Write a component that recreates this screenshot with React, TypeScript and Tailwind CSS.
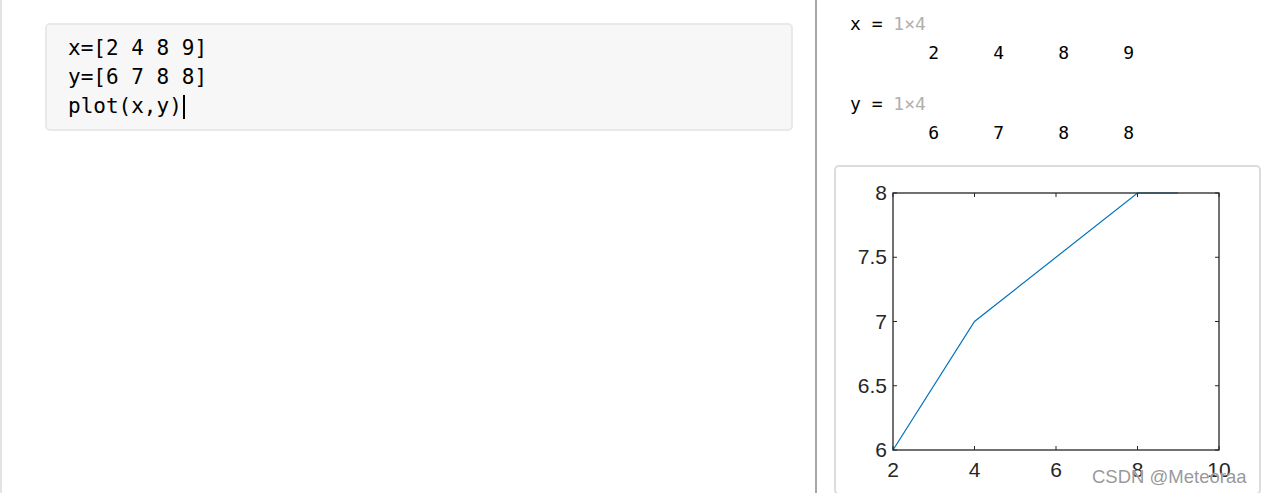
import React from 'react'

// Live-editor style view: code cell on the left, output + figure on the right.

const CODE = ['x=[2 4 8 9]', 'y=[6 7 8 8]', 'plot(x,y)']

const OUTPUTS = [
  { name: 'x', size: '1×4', values: [2, 4, 8, 9] },
  { name: 'y', size: '1×4', values: [6, 7, 8, 8] },
]

// axes geometry in figure-box coordinates
const AX = { left: 57, top: 26, width: 326, height: 257 }
const xs = (v: number) => AX.left + ((v - 2) / 8) * AX.width
const ys = (v: number) => AX.top + ((8 - v) / 2) * AX.height

function Plot() {
  const xTicks = [2, 4, 6, 8, 10]
  const yTicks = [6, 6.5, 7, 7.5, 8]
  const pts = [
    [2, 6],
    [4, 7],
    [8, 8],
    [9, 8],
  ]
  const right = AX.left + AX.width
  const bottom = AX.top + AX.height
  return (
    <svg width="425" height="326" className="block" style={{ fontFamily: '"Liberation Sans", Arial, sans-serif' }}>
      <polyline
        points={pts.map(([x, y]) => `${xs(x)},${ys(y)}`).join(' ')}
        fill="none"
        stroke="#0072BD"
        strokeWidth="1.2"
      />
      <rect x={AX.left} y={AX.top} width={AX.width} height={AX.height} fill="none" stroke="#262626" strokeWidth="1.3" />
      {xTicks.map((t) => (
        <g key={t}>
          <line x1={xs(t)} x2={xs(t)} y1={bottom} y2={bottom - 4} stroke="#262626" />
          <line x1={xs(t)} x2={xs(t)} y1={AX.top} y2={AX.top + 4} stroke="#262626" />
          <text x={xs(t)} y={bottom + 27} fontSize="21" fill="#262626" textAnchor="middle">
            {t}
          </text>
        </g>
      ))}
      {yTicks.map((t) => (
        <g key={t}>
          <line x1={AX.left} x2={AX.left + 4} y1={ys(t)} y2={ys(t)} stroke="#262626" />
          <line x1={right} x2={right - 4} y1={ys(t)} y2={ys(t)} stroke="#262626" />
          <text x={AX.left - 6} y={ys(t) + 7} fontSize="21" fill="#262626" textAnchor="end">
            {t}
          </text>
        </g>
      ))}
    </svg>
  )
}

export default function App() {
  return (
    <div className="flex h-[493px] w-[1261px] overflow-hidden bg-white">
      {/* editor side */}
      <div className="w-[815px] shrink-0 border-l-2 border-[#e3e3e3] pl-[43px] pt-[23px]">
        <div className="h-[108px] w-[748px] rounded-[5px] border-2 border-[#e9e9e9] bg-[#f7f7f7] pl-[21px] pt-[9px]">
          {CODE.map((line, i) => (
            <div
              key={i}
              className="flex h-[29px] items-center font-['DejaVu_Sans_Mono',monospace] text-[21px] leading-[29px] text-black"
            >
              <span>{line}</span>
              {i === CODE.length - 1 && <span className="ml-[1px] h-[24px] w-[2px] bg-black" />}
            </div>
          ))}
        </div>
      </div>

      <div className="w-[2px] shrink-0 bg-[#a6a6a6]" />

      {/* output side */}
      <div className="flex min-w-0 flex-1 flex-col">
        <div className="flex flex-col gap-[22px] pl-[33px] pt-[9px] font-['DejaVu_Sans_Mono',monospace] text-[18px] leading-[29px] text-black">
          {OUTPUTS.map((o) => (
            <div key={o.name}>
              <div className="flex h-[29px] items-center whitespace-pre">
                <span>{o.name} = </span>
                <span className="text-[#b0b0b0]">{o.size}</span>
              </div>
              <div className="ml-[24px] flex h-[29px] items-center">
                {o.values.map((v, i) => (
                  <span key={i} className="w-[65px] text-right">
                    {v}
                  </span>
                ))}
              </div>
            </div>
          ))}
        </div>

        <div className="relative ml-[17px] mt-[18px] h-[330px] rounded-[5px] border-2 border-[#dcdcdc]">
          <Plot />
          <span className="absolute left-[256px] top-[301px] whitespace-nowrap font-['Liberation_Sans',Arial,sans-serif] text-[18.5px] leading-none text-[#8c8c8c]/90 [text-shadow:0_0_1px_#fff]">
            CSDN @Meteoraa
          </span>
        </div>
      </div>
    </div>
  )
}
